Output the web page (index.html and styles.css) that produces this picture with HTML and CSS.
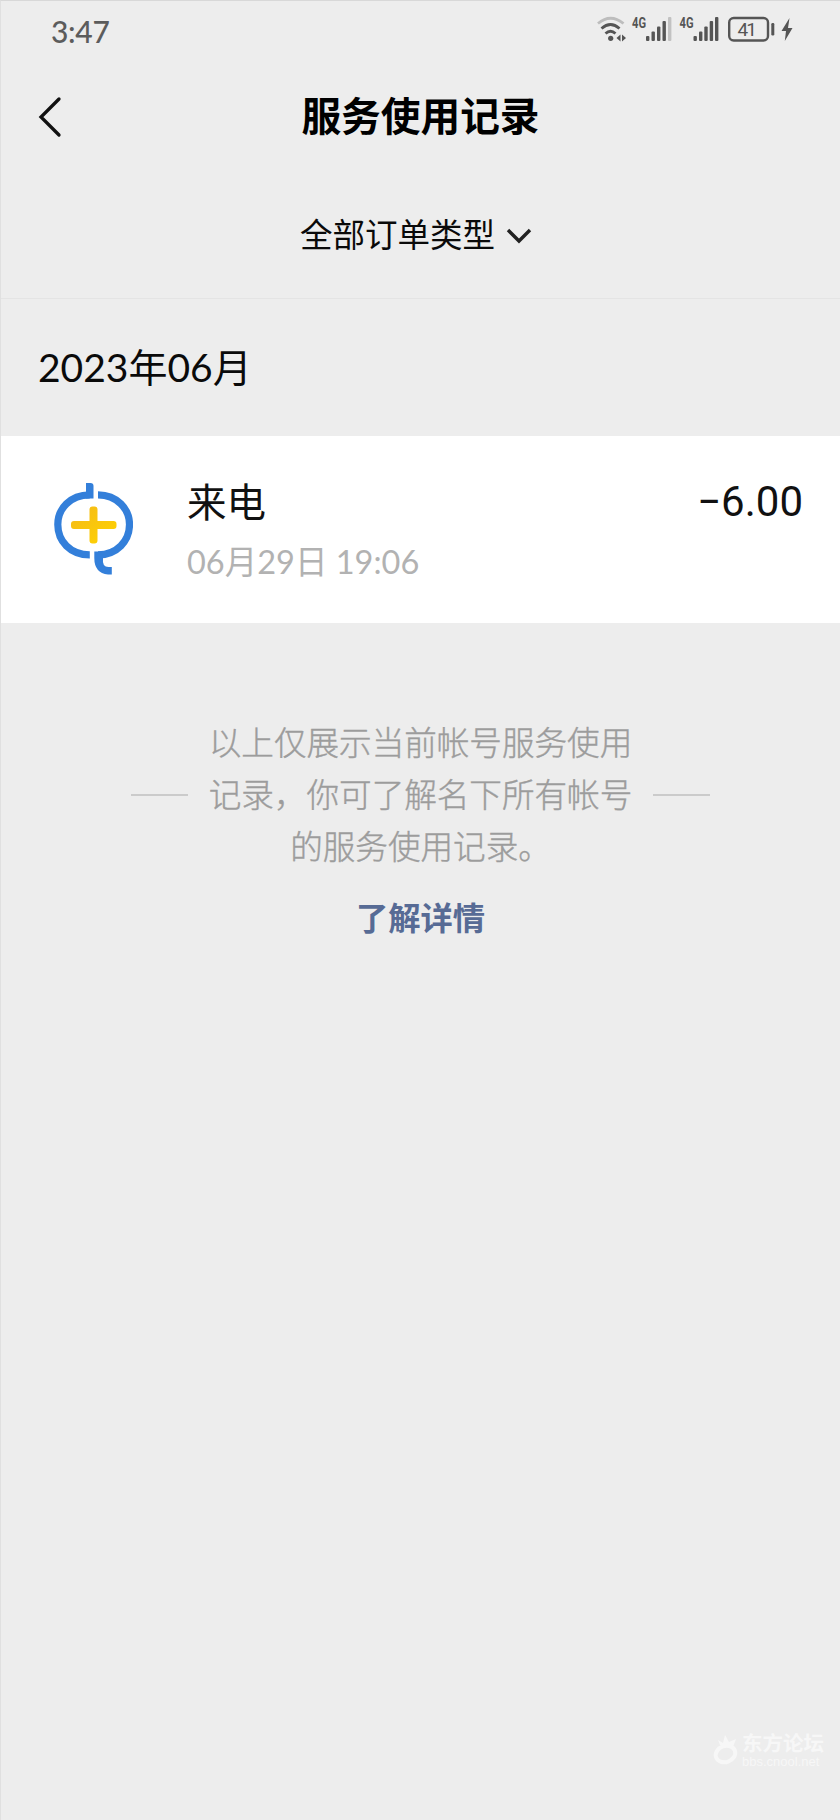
FILE: index.html
```html
<!DOCTYPE html>
<html lang="zh-CN">
<head>
<meta charset="utf-8">
<title>服务使用记录</title>
<link rel="stylesheet" href="styles.css">
</head>
<body>
<div class="screen">
  <div class="status">
    <span class="clock">3:47</span>
    <svg class="status-icons" width="200" height="32" viewBox="594 12 200 32">
      <g fill="none" stroke-width="2.8">
        <path d="M597 23.5Q609.500 13 622.500 23.500" stroke="#bdbdbd"/>
        <path d="M600.500 28.500Q609.500 20.500 618.500 28.500M604.500 33.500Q609.500 29 614.500 33.500" stroke="#555"/>
      </g>
      <g fill="#555">
        <circle cx="609.700" cy="38.300" r="2.600"/>
        <path d="M615.500 38l4-3.500v7zM625 38l-4-3.500v7z"/>
        <rect x="645" y="36" width="3.400" height="5" rx="1"/>
        <rect x="650.500" y="31.500" width="3.400" height="9.500" rx="1"/>
        <rect x="656" y="26.500" width="3.400" height="14.500" rx="1"/>
        <rect x="661.500" y="21" width="3.400" height="20" rx="1"/>
        <rect x="667" y="17" width="3.400" height="24" rx="1" fill="#c2c2c2"/>
        <rect x="692.500" y="36" width="3.400" height="5" rx="1"/>
        <rect x="698" y="31.500" width="3.400" height="9.500" rx="1"/>
        <rect x="703.300" y="26.500" width="3.400" height="14.500" rx="1"/>
        <rect x="708.700" y="21" width="3.400" height="20" rx="1"/>
        <rect x="714" y="17" width="3.400" height="24" rx="1"/>
        <rect x="770.300" y="23" width="3" height="12.500" rx="1.200"/>
        <path d="M788.500 18L780.500 31H785L783.800 41L791.500 28H787Z"/>
      </g>
      <rect x="728.200" y="18" width="38.800" height="22.500" rx="4.500" fill="none" stroke="#555" stroke-width="2.400"/>
      <g class="status-text">
        <text x="631" y="27.500" textLength="14" lengthAdjust="spacingAndGlyphs" class="net">4G</text>
        <text x="678.500" y="27.500" textLength="14" lengthAdjust="spacingAndGlyphs" class="net">4G</text>
        <text x="736.500" y="36.300" textLength="19.500" class="level">41</text>
      </g>
    </svg>
  </div>
  <header class="header">
    <svg class="back" width="26" height="44" viewBox="0 0 26 44"><path d="M22 4L4 22L22 40" fill="none" stroke="#111" stroke-width="3.300" stroke-linecap="round"/></svg>
    <h1 class="title">服务使用记录</h1>
  </header>
  <div class="filter">
    <span>全部订单类型</span>
    <svg class="chevron" width="26" height="18" viewBox="0 0 26 18"><path d="M2 3L13 14L24 3" fill="none" stroke="#222" stroke-width="3.400"/></svg>
  </div>
  <div class="month">2023<span class="cjk">年</span>06<span class="cjk">月</span></div>
  <div class="record">
    <svg class="logo" width="80" height="94" viewBox="53 482 80 94">
      <defs><linearGradient id="gold" x1="0" y1="0" x2="1" y2="1"><stop offset="0" stop-color="#f4b91a"/><stop offset="1" stop-color="#ffd400"/></linearGradient></defs>
      <path d="M89.800 494.800C70 494.800 57.800 509 57.800 524.500C57.800 541 70 554.800 89.800 554.800" fill="none" stroke="#337fda" stroke-width="7.200"/>
      <path d="M98 494.800C117 494.800 129.500 509 129.500 524.500C129.500 541 117 554.800 98 554.800" fill="none" stroke="#337fda" stroke-width="7.200"/>
      <path d="M86 483H90.500Q93.500 483 93.500 486V498.400H86Z" fill="#337fda"/>
      <path d="M94.300 551.500H103V558.400Q102 567 108.500 567H111.800V574.500H108Q94.300 573 94.300 558Z" fill="#337fda"/>
      <path d="M92.500 506.500H94.500Q97.500 506.500 97.500 509.500V521H113.500Q116.500 521 116.500 524V526Q116.500 529 113.500 529H97.500V540.500Q97.500 543.500 94.500 543.500H92.500Q89.500 543.500 89.500 540.500V529H74Q71 529 71 526V524Q71 521 74 521H89.500V509.500Q89.500 506.500 92.500 506.500Z" fill="url(#gold)"/>
    </svg>
    <div class="info">
      <div class="name">来电</div>
      <div class="date">06<span class="cjk">月</span>29<span class="cjk">日</span> 19:06</div>
    </div>
    <div class="amount">−6.00</div>
  </div>
  <div class="notice">
    <i class="rule"></i>
    <p class="notice-text">以上仅展示当前帐号服务使用<br>记录，你可了解名下所有帐号<br>的服务使用记录。</p>
    <i class="rule"></i>
  </div>
  <a class="details">了解详情</a>
  <div class="forum">
    <svg width="28" height="34" viewBox="0 0 28 34"><path d="M8 12L6 7L11 10L13 2L17 9L24 6L21 14" fill="#f7f7f7"/><ellipse cx="13.500" cy="21" rx="10" ry="8" transform="rotate(-20 13.500 21)" fill="none" stroke="#f7f7f7" stroke-width="4"/></svg>
    <div><div class="forum-name">东方论坛</div><div class="forum-url">bbs.cnool.net</div></div>
  </div>
</div>
</body>
</html>
```
FILE: styles.css
```css
* { box-sizing: border-box; }
body { margin: 0; background: #ededed; font-family: "Noto Sans CJK SC", sans-serif; color: #0a0a0a; }
.screen { width: 840px; height: 1820px; display: flex; flex-direction: column; border-top: 1px solid #d8d8d8; border-left: 1px solid #e0e0e0; overflow: hidden; }
.status { height: 60px; flex: none; display: flex; align-items: flex-start; justify-content: space-between; padding: 11px 45px 0 50px; }
.clock { font: 500 30px/38px Lato, sans-serif; letter-spacing: -0.3px; color: #5c5c5c; }
.status-icons { display: block; }
.status-text { fill: #555; }
.net { font: 700 14.500px Roboto, sans-serif; }
.level { font: 400 19px Roboto, sans-serif; }
.header { height: 110px; flex: none; display: grid; grid-template-columns: 64px 1fr 64px; align-items: center; }
.back { margin: 2px 0 0 36px; }
.title { margin: 0; padding-bottom: 4px; text-align: center; font-size: 39.700px; line-height: 56px; font-weight: 700; color: #000; }
.filter { height: 128px; flex: none; display: flex; justify-content: center; align-items: center; gap: 11px; font-size: 32.500px; line-height: 48px; padding: 0 9px 3px 0; border-bottom: 1px solid #e4e4e4; }
.chevron { margin-top: 5px; }
.month { height: 137px; flex: none; padding: 38px 0 0 37px; font: 400 39px/60px Lato, sans-serif; }
.cjk { font-family: "Noto Sans CJK SC", sans-serif; line-height: 1; }
.record { height: 187px; flex: none; background: #fff; display: flex; padding: 37px 37px 0 52px; }
.logo { margin-top: 9px; flex: none; }
.info { flex: 1; margin-left: 54px; }
.name { font-size: 39.500px; line-height: 54px; color: #111; }
.date { margin-top: 11px; font: 400 32.500px/48px Lato, sans-serif; color: #b2b2b2; }
.amount { font: 400 42px/58px Roboto, sans-serif; color: #111; }
.notice { flex: none; display: flex; align-items: center; justify-content: center; gap: 21px; margin-top: 94px; }
.notice-text { margin: -2px 0 2px; text-align: center; font-size: 32.600px; line-height: 52.200px; font-weight: 300; -webkit-text-stroke: 0.4px #9c9c9c; color: #9c9c9c; white-space: nowrap; }
.rule { width: 57px; height: 2px; background: #cbcbcb; }
.details { flex: none; align-self: center; margin-top: 18px; font-size: 32.300px; line-height: 48px; font-weight: 700; color: #576b95; }
.forum { margin: auto 16px 51px auto; display: flex; gap: 2px; align-items: center; color: #f7f7f7; }
.forum-name { font-size: 20.500px; line-height: 24px; font-weight: 700; }
.forum-url { font: 400 13px/15px "Liberation Sans", sans-serif; }
```
